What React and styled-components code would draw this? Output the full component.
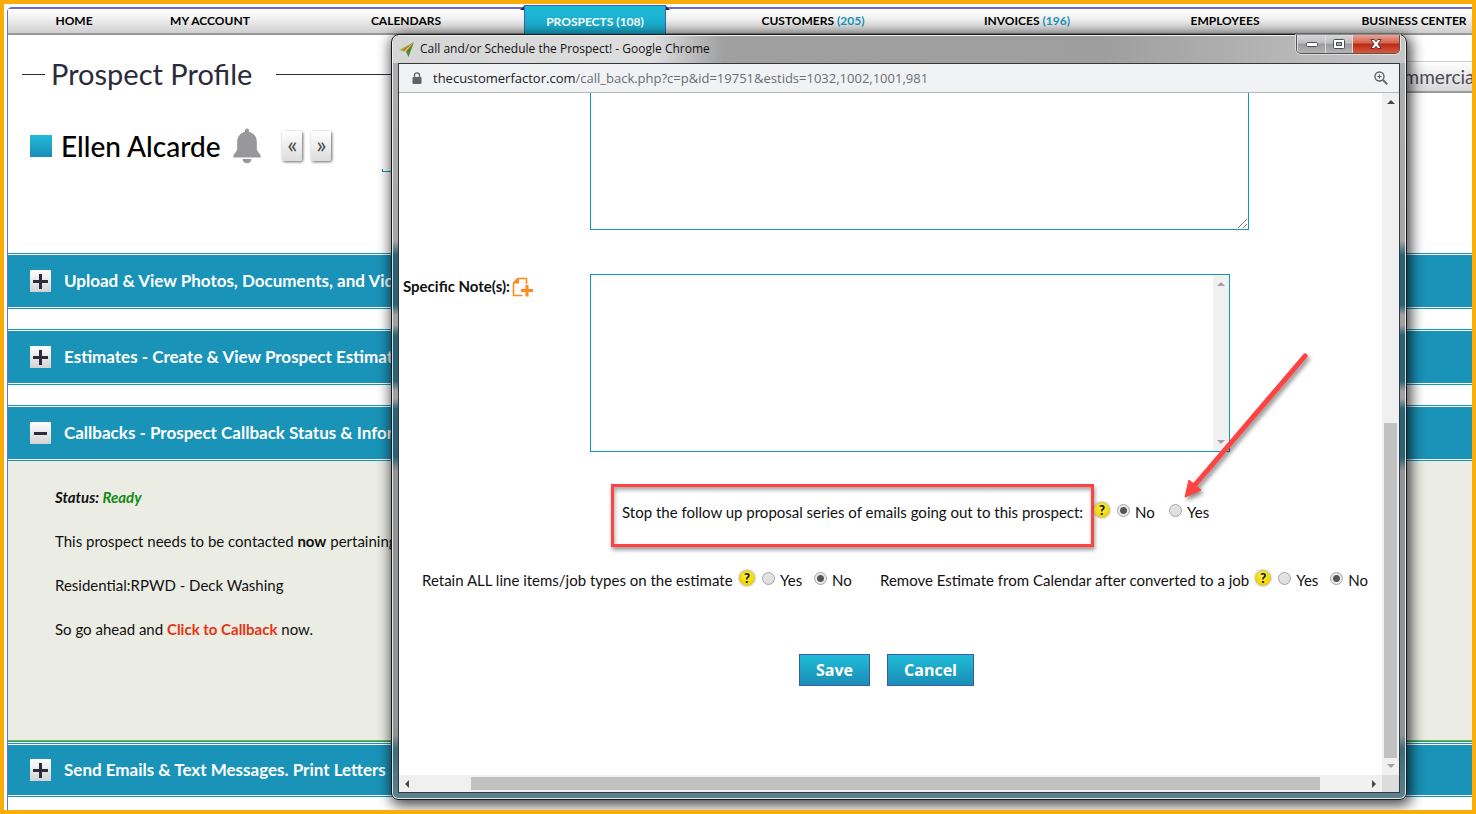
import React, { useState } from "react";
import styled, { createGlobalStyle, css } from "styled-components";

const NAV_ITEMS = [
  { label: "HOME" },
  { label: "MY ACCOUNT" },
  { label: "CALENDARS" },
  { label: "PROSPECTS", count: 108, active: true },
  { label: "CUSTOMERS", count: 205 },
  { label: "INVOICES", count: 196 },
  { label: "EMPLOYEES" },
  { label: "BUSINESS CENTER" },
];

const SECTIONS = [
  "Upload & View Photos, Documents, and Videos",
  "Estimates - Create & View Prospect Estimates",
];

function PlusIcon() {
  return (
    <svg width="15" height="15" viewBox="0 0 15 15" aria-hidden="true">
      <path d="M6 0h3v6h6v3H9v6H6V9H0V6h6z" fill="#2b2b3b" />
    </svg>
  );
}

function MinusIcon() {
  return (
    <svg width="15" height="15" viewBox="0 0 15 15" aria-hidden="true">
      <path d="M1 6h13v3H1z" fill="#2b2b3b" />
    </svg>
  );
}

function BellIcon() {
  return (
    <svg width="28" height="36" viewBox="0 0 28 36" aria-hidden="true">
      <path
        d="M12 2.500a2 2 0 0 1 4 0v1.200c5 1.300 7.800 5.300 7.800 10.300v6.500c0 3.500 4 4.800 4 9H.200c0-4.200 4-5.500 4-9V14C4.200 9 7 5 12 3.700z"
        fill="#98989a"
      />
      <path d="M9.500 31h9c0 2.500-2 4.200-4.500 4.200S9.500 33.500 9.500 31z" fill="#98989a" />
    </svg>
  );
}

function SiteIcon() {
  return (
    <svg width="16" height="15" viewBox="0 0 16 15" aria-hidden="true">
      <path d="M15 0 0 8l5 1.500z" fill="#8bc34a" />
      <path d="M15 0 4 7.500l1.500 2z" fill="#e2572b" />
      <path d="M15 0 5 9l2.500 1z" fill="#f6c667" />
      <path d="M15 0 7 9.500 9.500 15z" fill="#4d8a2e" />
    </svg>
  );
}

function LockIcon() {
  return (
    <svg width="10" height="13" viewBox="0 0 10 13" aria-hidden="true">
      <path d="M2.500 6V3.300a2.500 2.500 0 0 1 5 0V6" fill="none" stroke="#5f6368" strokeWidth="1.300" />
      <rect x="0.500" y="5" width="9" height="7" rx="1" fill="#5f6368" />
    </svg>
  );
}

function ZoomIcon() {
  return (
    <svg width="14" height="14" viewBox="0 0 14 14" fill="none" stroke="#5f6368" aria-hidden="true">
      <circle cx="5.500" cy="5.500" r="4.500" strokeWidth="1.400" />
      <path d="M9 9l4.300 4.300" strokeWidth="1.800" />
      <path d="M5.500 3.300v4.400M3.300 5.500h4.400" />
    </svg>
  );
}

function NoteIcon() {
  return (
    <svg width="22" height="20" viewBox="0 0 22 20" aria-hidden="true">
      <path
        d="M14.500 7V1.500H6L1.500 6v12.500h9"
        fill="none"
        stroke="#ff8a1f"
        strokeWidth="1.600"
      />
      <path d="M1 6.500V5.500L5.500 1h1.500v5.500z" fill="#ff8a1f" />
      <path d="M13.500 8h3v4H21v3h-4.500v4.500h-3V15H9v-3h4.500z" fill="#ff8a1f" />
    </svg>
  );
}

function ArrowMark() {
  return (
    <ArrowSvg width="134" height="156" viewBox="0 0 134 156" aria-hidden="true">
      <path d="M124 6 13 136" stroke="#ff4343" strokeWidth="5" strokeLinecap="round" />
      <path d="M4 147 8 130l12 10z" fill="#ff4343" stroke="#ff4343" strokeLinejoin="round" />
    </ArrowSvg>
  );
}

function YesNo({ name, value, order, onChange, marked }) {
  return (
    <Options>
      {order.map((option) => (
        <Option key={option}>
          <Radio
            type="radio"
            name={name}
            value={option}
            checked={value === option}
            onChange={() => onChange(name, option)}
          />
          {option}
          {marked === option && <ArrowMark />}
        </Option>
      ))}
    </Options>
  );
}

function CallbackWindow() {
  const [answers, setAnswers] = useState({
    stopSeries: "No",
    retainItems: "No",
    removeEstimate: "No",
  });

  const handleAnswer = (name, option) => {
    setAnswers({ ...answers, [name]: option });
  };

  return (
    <Popup>
      <TitleBar>
        <SiteIcon />
        <WindowTitle>Call and/or Schedule the Prospect! - Google Chrome</WindowTitle>
        <WindowControls>
          <WindowButton $width={28} aria-label="Minimize">
            <svg width="12" height="5" viewBox="0 0 12 5">
              <rect x="0.500" y="0.500" width="11" height="4" rx="1" fill="#fff" stroke="#4a4f5e" />
            </svg>
          </WindowButton>
          <WindowButton $width={27} aria-label="Maximize">
            <svg width="12" height="10" viewBox="0 0 12 10">
              <rect x="0.500" y="0.500" width="11" height="9" rx="1" fill="#fff" stroke="#4a4f5e" />
              <rect x="3.500" y="3.500" width="5" height="3" fill="#aaa" stroke="#4a4f5e" />
            </svg>
          </WindowButton>
          <WindowButton $width={47} $close aria-label="Close">
            <svg width="12" height="10" viewBox="0 0 12 10">
              <path
                d="M.8.500h3.400L6 2.700 7.800.500h3.400L8 5l3.200 4.500H7.800L6 7.300 4.200 9.500H.8L4 5z"
                fill="#fff"
                stroke="#5a3540"
              />
            </svg>
          </WindowButton>
        </WindowControls>
      </TitleBar>
      <Viewport>
        <AddressBar>
          <LockIcon />
          <Url>
            <b>thecustomerfactor.com</b>
            /call_back.php?c=p&id=19751&estids=1032,1002,1001,981
          </Url>
          <ZoomIcon />
        </AddressBar>
        <Scroller>
          <FormPane>
            <NoteRow>
              <NoteLabel as="span" />
              <NoteBox>
                <TextArea $width={659} $height={137} $clipped aria-label="Callback notes" />
                <Grip width="9" height="9" viewBox="0 0 9 9" aria-hidden="true">
                  <path d="M0 9 9 0M5 9l4-4" stroke="#777" />
                </Grip>
              </NoteBox>
            </NoteRow>
            <NoteRow>
              <NoteLabel htmlFor="specific-notes">
                Specific Note(s): <NoteIcon />
              </NoteLabel>
              <NoteBox $framed>
                <TextArea id="specific-notes" $width={622} $height={176} $plain />
                <Track>
                  <Arrow $dir="up" $muted />
                  <Arrow $dir="down" $muted />
                </Track>
              </NoteBox>
            </NoteRow>
            <StopRow>
              <Highlight>
                Stop the follow up proposal series of emails going out to this prospect:
              </Highlight>
              <Help type="button">?</Help>
              <YesNo
                name="stopSeries"
                order={["No", "Yes"]}
                value={answers.stopSeries}
                onChange={handleAnswer}
                marked="Yes"
              />
            </StopRow>
            <EstimateRow>
              <Question $width={311}>Retain ALL line items/job types on the estimate</Question>
              <Help type="button">?</Help>
              <YesNo
                name="retainItems"
                order={["Yes", "No"]}
                value={answers.retainItems}
                onChange={handleAnswer}
              />
              <Question $width={368} $spaced>
                Remove Estimate from Calendar after converted to a job
              </Question>
              <Help type="button">?</Help>
              <YesNo
                name="removeEstimate"
                order={["Yes", "No"]}
                value={answers.removeEstimate}
                onChange={handleAnswer}
              />
            </EstimateRow>
            <Actions>
              <ActionButton type="button">Save</ActionButton>
              <ActionButton type="button">Cancel</ActionButton>
            </Actions>
          </FormPane>
          <VerticalBar>
            <Arrow $dir="up" />
            <Thumb />
            <Arrow $dir="down" $muted />
          </VerticalBar>
          <HorizontalBar>
            <Arrow $dir="left" />
            <HorizontalThumb />
            <Arrow $dir="right" />
          </HorizontalBar>
          <Corner />
        </Scroller>
      </Viewport>
    </Popup>
  );
}

export default function App() {
  return (
    <Frame>
      <GlobalStyle />
      <Page>
        <Nav>
          {NAV_ITEMS.map(({ label, count, active }) => (
            <NavLink href="#" key={label} $active={active}>
              {label}
              {count && <Count $active={active}>({count})</Count>}
            </NavLink>
          ))}
        </Nav>
        <Header>
          <Rule $width={23} />
          <Heading>Prospect Profile</Heading>
          <Rule />
          <TypeTab type="button">Commercial</TypeTab>
        </Header>
        <NameRow>
          <Swatch />
          <Name>Ellen Alcarde</Name>
          <BellIcon />
          <Pager>
            <PagerButton type="button">«</PagerButton>
            <PagerButton type="button">»</PagerButton>
          </Pager>
        </NameRow>
        <CardEdge />
        <Sections>
          {SECTIONS.map((title) => (
            <SectionBar key={title}>
              <Toggle type="button" aria-label={`Open ${title}`}>
                <PlusIcon />
              </Toggle>
              <SectionTitle>{title}</SectionTitle>
            </SectionBar>
          ))}
          <div>
            <SectionBar>
              <Toggle type="button" aria-label="Close Callbacks">
                <MinusIcon />
              </Toggle>
              <SectionTitle>Callbacks - Prospect Callback Status & Information</SectionTitle>
            </SectionBar>
            <Panel>
              <Status>
                Status: <em>Ready</em>
              </Status>
              <p>
                This prospect needs to be contacted <strong>now</strong> pertaining to:
              </p>
              <p>Residential:RPWD - Deck Washing</p>
              <p>
                So go ahead and <CallbackLink href="#">Click to Callback</CallbackLink> now.
              </p>
            </Panel>
            <SectionBar $compact>
              <Toggle type="button" aria-label="Open Send Emails">
                <PlusIcon />
              </Toggle>
              <SectionTitle>Send Emails & Text Messages. Print Letters</SectionTitle>
            </SectionBar>
          </div>
        </Sections>
      </Page>
      <CallbackWindow />
    </Frame>
  );
}

const GlobalStyle = createGlobalStyle`
  * {
    box-sizing: border-box;
  }
  body {
    margin: 0;
    background: #fff;
    color: #111;
    font-family: Lato, "Open Sans", sans-serif;
    font-size: 15px;
    line-height: 20px;
  }
  p, h1, h2 {
    margin: 0;
  }
  button, textarea, input {
    margin: 0;
    font-family: inherit;
  }
`;

const Frame = styled.div`
  position: relative;
  display: flex;
  flex-direction: column;
  min-height: 100vh;
  padding: 3px 0 0 3px;
  border: 4px solid #f9ad06;
  overflow: hidden;
`;

const Page = styled.main`
  flex: 1;
  border-top: 2px solid #6c6dcb;
  border-left: 1px solid #6c6dcb;
  border-top-left-radius: 5px;
  white-space: nowrap;
`;

const Nav = styled.nav`
  display: grid;
  grid-template-columns: 116fr 156fr 236fr 142fr 294fr 134fr 262fr 116fr;
  height: 26px;
  padding-left: 8px;
  border-bottom: 2px solid #979797;
  background: linear-gradient(#fff, #f0f0f0 40%, #cfcfcf);
`;

const NavLink = styled.a`
  position: relative;
  display: flex;
  align-items: center;
  justify-content: center;
  gap: 3px;
  min-width: 0;
  color: #000;
  font-size: 12px;
  font-weight: 700;
  text-decoration: none;
  ${({ $active }) =>
    $active &&
    css`
      margin: -4px 0 -2px;
      padding-top: 2px;
      border: 1px solid #3d62a8;
      border-bottom: none;
      background: linear-gradient(#1cb9d6, #1ba9cb);
      color: #fff;
      &::before,
      &::after {
        content: "";
        position: absolute;
        top: 0;
        left: -5px;
        border: solid transparent;
        border-width: 0 0 4px 4px;
        border-bottom-color: #26265e;
      }
      &::after {
        left: auto;
        right: -5px;
        border-width: 0 4px 4px 0;
      }
    `}
`;

const Count = styled.span`
  color: ${({ $active }) => ($active ? "#fff" : "#1a93b9")};
`;

const Header = styled.header`
  display: flex;
  align-items: center;
  height: 40px;
  margin-top: 19px;
  padding-left: 14px;
`;

const Rule = styled.span`
  flex: ${({ $width }) => ($width ? `0 0 ${$width}px` : 1)};
  height: 1px;
  background: #2b2b3b;
`;

const Heading = styled.h1`
  margin: 0 24px 0 6px;
  color: #2b2b3b;
  font-size: 29px;
  font-weight: 400;
  line-height: 38px;
`;

const TypeTab = styled.button`
  height: 32px;
  margin: 6px -20px 0 0;
  padding: 0 12px;
  border: 1px solid #ccc;
  border-bottom: 2px solid #999;
  background: linear-gradient(#fff, #d6d6d6);
  color: #4a4a5a;
  font-size: 19px;
`;

const NameRow = styled.div`
  display: flex;
  align-items: center;
  height: 40px;
  margin-top: 32px;
  padding-left: 22px;
`;

const Swatch = styled.span`
  width: 22px;
  height: 22px;
  background: linear-gradient(#1fbcd9, #1a8db5);
`;

const Name = styled.h2`
  margin: 0 13px 0 9px;
  color: #000;
  font-size: 28px;
  font-weight: 500;
  line-height: 40px;
`;

const Pager = styled.div`
  display: flex;
  gap: 9px;
  margin-left: 21px;
`;

const PagerButton = styled.button`
  width: 20px;
  height: 30px;
  padding: 0 0 4px;
  border: none;
  border-radius: 2px;
  background: linear-gradient(#fff, #dcdcdc);
  box-shadow: 1px 1px 3px rgba(0, 0, 0, 0.6);
  color: #4a4a4a;
  font-size: 24px;
  line-height: 24px;
`;

const CardEdge = styled.div`
  width: 700px;
  height: 3px;
  margin: 3px 0 0 374px;
  border: solid #1a93b9;
  border-width: 0 0 1px 1px;
`;

const Sections = styled.div`
  display: flex;
  flex-direction: column;
  gap: 20px;
  margin-top: 81px;
`;

const SectionBar = styled.section`
  display: flex;
  align-items: center;
  gap: 13px;
  height: ${({ $compact }) => ($compact ? 54 : 56)}px;
  padding: 0 22px;
  border: double #1a93b9;
  border-width: 3px 0;
  background: #1a93b9;
  background-clip: padding-box;
`;

const Toggle = styled.button`
  display: flex;
  align-items: center;
  justify-content: center;
  width: 21px;
  height: 22px;
  padding: 0;
  border: none;
  background: linear-gradient(#fff, #d2d2d2);
`;

const SectionTitle = styled.h2`
  color: #fff;
  font-size: 17px;
  font-weight: 700;
`;

const Panel = styled.div`
  display: flex;
  flex-direction: column;
  gap: 24px;
  min-height: 281px;
  margin-bottom: 1px;
  padding: 26px 47px;
  border-bottom: 1px solid #1a93b9;
  background: #ebece4;
  box-shadow: inset 0 -1px 0 #7fbf00;
  color: #111;
`;

const Status = styled.p`
  font-style: italic;
  font-weight: 700;
  em {
    color: #138a13;
  }
`;

const CallbackLink = styled.a`
  color: #e5350f;
  font-weight: 700;
  text-decoration: none;
`;

/* Popup window */

const Popup = styled.div`
  position: absolute;
  top: 30px;
  right: 65px;
  bottom: 10px;
  left: 387px;
  display: flex;
  flex-direction: column;
  padding: 0 6px 6px;
  border: 1px solid #16191c;
  border-radius: 8px 8px 7px 7px;
  background: linear-gradient(
    #b0b0b0,
    #a6a6a6 206px,
    #2a6276 220px,
    #2a6276 270px,
    #a0a0a0 280px,
    #a0a0a0 290px,
    #2a6276 300px,
    #2a6276 346px,
    #a0a0a0 356px,
    #a0a0a0 364px,
    #2a6276 374px,
    #2a6276 422px,
    #939496 436px,
    #939496 700px,
    #3d6d7c 714px,
    #5d818c
  );
  box-shadow:
    inset 0 0 0 1px rgba(255, 255, 255, 0.8),
    2px 3px 14px 2px rgba(0, 0, 0, 0.75);
`;

const TitleBar = styled.div`
  display: flex;
  align-items: flex-start;
  height: 27px;
  margin: 1px -5px 0;
  padding-left: 6px;
  border-radius: 6px 6px 0 0;
  background: linear-gradient(90deg, #d6d6d6, #dedede 260px, #a0a0a0 330px, #9e9e9e 70%, #c6c6c6);
  & > svg {
    margin-top: 6px;
  }
`;

const WindowTitle = styled.span`
  flex: 1;
  margin: 3px 0 0 5px;
  color: #111;
  font-family: "Open Sans", "Noto Sans", sans-serif;
  font-size: 12px;
`;

const WindowControls = styled.div`
  display: flex;
  margin: -1px 5px 0 0;
  border: 1px solid #555;
  border-top: none;
  border-radius: 0 0 5px 5px;
  box-shadow: 0 0 0 1px rgba(255, 255, 255, 0.5);
  overflow: hidden;
`;

const WindowButton = styled.button`
  display: flex;
  align-items: center;
  justify-content: center;
  width: ${({ $width }) => $width}px;
  height: 18px;
  padding: 0;
  border: none;
  border-left: 1px solid #ddd;
  background: ${({ $close }) =>
    $close
      ? "linear-gradient(#e8a595, #d5604a 45%, #b92b12 50%, #d9583c)"
      : "linear-gradient(#d8d8d8, #bdbdbd 45%, #9a9a9a 50%, #b4b4b4)"};
`;

const Viewport = styled.div`
  flex: 1;
  display: flex;
  flex-direction: column;
  min-height: 0;
  border: 1px solid #33383c;
  background: #fff;
`;

const AddressBar = styled.div`
  display: flex;
  align-items: center;
  height: 29px;
  padding: 0 11px 0 13px;
  border-bottom: 1px solid #b5b7ba;
  background: #f1f2f4;
`;

const Url = styled.span`
  flex: 1;
  margin-left: 11px;
  color: #6a6e73;
  font-family: "Open Sans", "Noto Sans", sans-serif;
  font-size: 13px;
  b {
    color: #222;
    font-weight: 400;
  }
`;

const Scroller = styled.div`
  flex: 1;
  display: grid;
  grid-template-columns: minmax(0, 1fr) 17px;
  grid-template-rows: minmax(0, 1fr) 17px;
  min-height: 0;
`;

const FormPane = styled.form`
  display: flex;
  flex-direction: column;
  white-space: nowrap;
`;

const NoteRow = styled.div`
  display: flex;
  & + & {
    margin-top: 44px;
  }
`;

const NoteLabel = styled.label`
  display: flex;
  align-items: flex-start;
  gap: 2px;
  width: 191px;
  padding: 2px 0 0 4px;
  font-weight: 700;
  svg {
    margin-top: 1px;
  }
`;

const NoteBox = styled.div`
  position: relative;
  display: flex;
  ${({ $framed }) => $framed && "border: 1px solid #1a93b9;"}
`;

const TextArea = styled.textarea`
  display: block;
  width: ${({ $width }) => $width}px;
  height: ${({ $height }) => $height}px;
  padding: 4px;
  border: ${({ $plain }) => ($plain ? "none" : "1px solid #1a93b9")};
  ${({ $clipped }) => $clipped && "border-top: none;"}
  outline: none;
  resize: none;
  overflow: hidden;
  font-size: 14px;
`;

const Grip = styled.svg`
  position: absolute;
  right: 2px;
  bottom: 2px;
`;

const Track = styled.div`
  display: flex;
  flex-direction: column;
  align-items: center;
  justify-content: space-between;
  width: 16px;
  padding: 7px 0;
  background: #f0f0f0;
`;

const ARROWS = {
  up: "0 4px 4px; border-bottom-color",
  down: "4px 4px 0; border-top-color",
  left: "4px 4px 4px 0; border-right-color",
  right: "4px 0 4px 4px; border-left-color",
};

const Arrow = styled.span`
  width: 0;
  height: 0;
  border: 0 solid transparent;
  border-width: ${({ $dir, $muted }) => `${ARROWS[$dir]}: ${$muted ? "#a0a0a0" : "#484848"}`};
`;

const StopRow = styled.div`
  display: flex;
  align-items: center;
  height: 63px;
  margin: 32px 0 0 212px;
`;

const Highlight = styled.span`
  display: flex;
  align-items: center;
  width: 483px;
  height: 63px;
  padding: 0 0 8px 8px;
  border: 3px solid #ff4343;
  box-shadow:
    1px 3px 4px rgba(0, 0, 0, 0.4),
    inset 1px 3px 4px rgba(0, 0, 0, 0.35);
`;

const EstimateRow = styled.div`
  display: flex;
  align-items: center;
  height: 24px;
  margin: 21px 0 0 23px;
`;

const Question = styled.span`
  flex: 0 0 ${({ $width }) => $width}px;
  margin-right: 6px;
  ${({ $spaced }) => $spaced && "margin-left: 14px;"}
`;

const Help = styled.button`
  flex: none;
  width: 16px;
  height: 16px;
  margin-bottom: 4px;
  padding: 0;
  border: 1px solid #d9c84a;
  border-radius: 50%;
  background: radial-gradient(circle at 50% 35%, #fff04a, #f2d500 70%);
  box-shadow: 0 0 2px rgba(0, 0, 0, 0.5);
  color: #111;
  font-size: 13px;
  font-weight: 900;
  line-height: 14px;
  ${StopRow} & {
    margin-bottom: 12px;
  }
`;

const Options = styled.div`
  display: flex;
  margin-left: 7px;
  ${StopRow} & {
    margin-bottom: 8px;
  }
`;

const Option = styled.label`
  position: relative;
  display: flex;
  align-items: center;
  gap: 5px;
  width: 52px;
`;

const Radio = styled.input`
  appearance: none;
  flex: none;
  width: 13px;
  height: 13px;
  margin-bottom: 3px;
  border: 1px solid #a5a5a5;
  border-radius: 50%;
  background: linear-gradient(#e4e4e4, #dedede);
  &:checked {
    background: radial-gradient(circle, #555 3px, #e8e8e8 4px);
  }
`;

const ArrowSvg = styled.svg`
  position: absolute;
  left: 12px;
  bottom: 16px;
  filter: drop-shadow(2px 3px 2px rgba(0, 0, 0, 0.45));
  pointer-events: none;
`;

const Actions = styled.div`
  display: flex;
  gap: 17px;
  margin: 62px 0 0 400px;
`;

const ActionButton = styled.button`
  height: 32px;
  padding: 0 16px;
  border: 1px solid #3b5ba5;
  background: linear-gradient(#1fbcd9, #1a8db5);
  color: #fff;
  font-family: "Open Sans", "Noto Sans", sans-serif;
  font-size: 16px;
  font-weight: 700;
`;

const VerticalBar = styled.div`
  display: flex;
  flex-direction: column;
  align-items: center;
  justify-content: space-between;
  padding: 7px 0;
  background: #f0f0f0;
`;

const Thumb = styled.div`
  width: 13px;
  height: 335px;
  margin: auto 0 6px;
  background: #c1c1c1;
`;

const HorizontalBar = styled.div`
  display: flex;
  align-items: center;
  padding: 0 6px;
  background: #f0f0f0;
`;

const HorizontalThumb = styled.div`
  flex: 1;
  height: 13px;
  margin: 0 52px 0 62px;
  background: #c1c1c1;
`;

const Corner = styled.div`
  background: #dcdcdc;
`;
